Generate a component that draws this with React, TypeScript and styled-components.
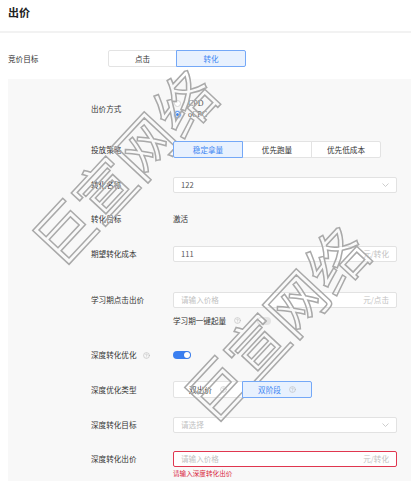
import React from 'react';
import styled, { createGlobalStyle } from 'styled-components';

const GlobalStyle = createGlobalStyle`
  html, body { margin: 0; padding: 0; background: #fff; }
  body { font-family: "Noto Sans CJK SC", "Noto Sans", sans-serif; color: #333; }
  * { box-sizing: border-box; }
`;

const Page = styled.div`
  position: relative;
  width: 411px;
  height: 481px;
  overflow: hidden;
  background: #fff;
  font-size: 7.6px;
  line-height: 1;
`;

const Header = styled.div`
  height: 33px;
  padding: 4px 0 0 8px;
  font-size: 11px;
  font-weight: 700;
  line-height: 16px;
  color: #222;
  border-bottom: 2px solid #f2f2f2;
`;

const TopRow = styled.div`
  display: flex;
  align-items: center;
  height: 17px;
  margin-top: 17px;
  padding-left: 8px;
`;

const TopLabel = styled.div`
  width: 100px;
  color: #333;
`;

const Panel = styled.div`
  margin: 12px 0 0 8px;
  background: #f8f8f8;
  padding: 19px 0 40px 83px;
  min-height: 410px;
`;

const FormItem = styled.div<{ $mt: number; $h: number }>`
  display: flex;
  align-items: center;
  margin-top: ${(p) => p.$mt}px;
  height: ${(p) => p.$h}px;
`;

const Label = styled.div`
  width: 82px;
  flex: none;
  display: flex;
  align-items: center;
  gap: 6px;
  color: #333;
`;

const Segments = styled.div`
  display: flex;
`;

const Segment = styled.div<{ $active?: boolean; $w?: number }>`
  position: relative;
  z-index: ${(p) => (p.$active ? 1 : 0)};
  width: ${(p) => p.$w ?? 70}px;
  height: 17px;
  display: flex;
  align-items: center;
  justify-content: center;
  gap: 8px;
  border: 1px solid ${(p) => (p.$active ? '#74a8f7' : '#e3e3e3')};
  background: ${(p) => (p.$active ? '#e8f1fe' : '#fff')};
  color: ${(p) => (p.$active ? '#3d86f2' : '#333')};
  & + & { margin-left: -1px; }
  &:first-child { border-radius: 2px 0 0 2px; }
  &:last-child { border-radius: 0 2px 2px 0; }
`;

const RadioGroup = styled.div`
  display: flex;
  flex-direction: column;
`;

const RadioItem = styled.div`
  display: flex;
  align-items: center;
  height: 11px;
  font-family: "Liberation Serif", serif;
  font-size: 8px;
  color: #555;
`;

const RadioCircle = styled.span<{ $checked?: boolean }>`
  width: 7px;
  height: 7px;
  margin: 0 7px 0 1px;
  border-radius: 50%;
  border: 1px solid ${(p) => (p.$checked ? '#3d86f2' : '#d6d6d6')};
  background: #fff;
  display: flex;
  align-items: center;
  justify-content: center;
  box-shadow: ${(p) => (p.$checked ? '0 0 0 1px rgba(61,134,242,0.18)' : 'none')};
  &::after {
    content: '';
    width: 3px;
    height: 3px;
    border-radius: 50%;
    background: ${(p) => (p.$checked ? '#3d86f2' : 'transparent')};
  }
`;

const Field = styled.div<{ $error?: boolean }>`
  width: 224px;
  height: 16px;
  display: flex;
  align-items: center;
  justify-content: space-between;
  padding: 0 7px;
  background: #fff;
  border: 1px solid ${(p) => (p.$error ? '#e0364f' : '#e2e2e2')};
  border-radius: 2px;
`;

const Value = styled.span<{ $placeholder?: boolean }>`
  color: ${(p) => (p.$placeholder ? '#c2c2c2' : '#555')};
`;

const Suffix = styled.span`
  color: #c2c2c2;
`;

const PlainText = styled.span`
  color: #333;
`;

const SubLine = styled.div`
  display: flex;
  align-items: center;
  color: #333;
`;

const Switch = styled.span<{ $on?: boolean }>`
  display: inline-flex;
  align-items: center;
  justify-content: ${(p) => (p.$on ? 'flex-end' : 'flex-start')};
  width: ${(p) => (p.$on ? 18 : 14)}px;
  height: 8px;
  padding: 1px;
  border-radius: 4px;
  background: ${(p) => (p.$on ? '#3b7ff0' : '#e4e4e4')};
  &::after {
    content: '';
    width: 6px;
    height: 6px;
    border-radius: 50%;
    background: #fff;
    box-shadow: 0 0 1px rgba(0, 0, 0, 0.25);
  }
`;

const ErrorText = styled.div`
  font-size: 6.6px;
  color: #d8283f;
`;

const Watermark = styled.div<{ $left: number; $top: number }>`
  position: absolute;
  left: ${(p) => p.$left}px;
  top: ${(p) => p.$top}px;
  width: 240px;
  text-align: center;
  font-family: "Noto Sans CJK SC", sans-serif;
  font-size: 60px;
  line-height: 60px;
  letter-spacing: -1px;
  white-space: nowrap;
  color: rgba(255, 255, 255, 0.15);
  -webkit-text-stroke: 1.5px #a9a9a9;
  transform: rotate(-47deg);
  transform-origin: center center;
  pointer-events: none;
`;

const Help = ({ ml = 0 }: { ml?: number }) => (
  <svg width="7" height="7" viewBox="0 0 24 24" style={{ marginLeft: ml, flex: 'none' }} fill="none" stroke="#b8b8b8" strokeWidth="2" strokeLinecap="round" strokeLinejoin="round">
    <circle cx="12" cy="12" r="10" />
    <path d="M9.09 9a3 3 0 0 1 5.83 1c0 2-3 3-3 3" />
    <path d="M12 17h.01" />
  </svg>
);

const Chevron = () => (
  <svg width="7" height="4" viewBox="0 0 7 4" fill="none" stroke="#c0c0c0" strokeWidth="0.8">
    <polyline points="0.5,0.5 3.5,3.5 6.5,0.5" />
  </svg>
);

export default function App() {
  return (
    <Page>
      <GlobalStyle />
      <Header>出价</Header>
      <TopRow>
        <TopLabel>竞价目标</TopLabel>
        <Segments>
          <Segment $w={69}>点击</Segment>
          <Segment $w={70} $active>转化</Segment>
        </Segments>
      </TopRow>
      <Panel>
        <FormItem $mt={0} $h={22}>
          <Label>出价方式</Label>
          <RadioGroup>
            <RadioItem><RadioCircle />CPD</RadioItem>
            <RadioItem><RadioCircle $checked />oCPC</RadioItem>
          </RadioGroup>
        </FormItem>
        <FormItem $mt={21} $h={17}>
          <Label>投放策略</Label>
          <Segments>
            <Segment $active>稳定拿量</Segment>
            <Segment>优先跑量</Segment>
            <Segment>优先低成本</Segment>
          </Segments>
        </FormItem>
        <FormItem $mt={19} $h={16}>
          <Label>转化名称</Label>
          <Field>
            <Value>122</Value>
            <Chevron />
          </Field>
        </FormItem>
        <FormItem $mt={18} $h={16}>
          <Label>转化目标</Label>
          <PlainText>激活</PlainText>
        </FormItem>
        <FormItem $mt={19} $h={16}>
          <Label>期望转化成本</Label>
          <Field>
            <Value>111</Value>
            <Suffix>元/转化</Suffix>
          </Field>
        </FormItem>
        <FormItem $mt={30} $h={16}>
          <Label>学习期点击出价</Label>
          <Field>
            <Value $placeholder>请输入价格</Value>
            <Suffix>元/点击</Suffix>
          </Field>
        </FormItem>
        <FormItem $mt={8} $h={9}>
          <Label />
          <SubLine>
            学习期一键起量
            <Help ml={8} />
            <span style={{ width: 16 }} />
            <Switch />
          </SubLine>
        </FormItem>
        <FormItem $mt={22} $h={16}>
          <Label>深度转化优化<Help /></Label>
          <Switch $on />
        </FormItem>
        <FormItem $mt={18} $h={17}>
          <Label>深度优化类型</Label>
          <Segments>
            <Segment>双出价<Help /></Segment>
            <Segment $active>双阶段<Help /></Segment>
          </Segments>
        </FormItem>
        <FormItem $mt={19} $h={16}>
          <Label>深度转化目标</Label>
          <Field>
            <Value $placeholder>请选择</Value>
            <Chevron />
          </Field>
        </FormItem>
        <FormItem $mt={18} $h={16}>
          <Label>深度转化出价</Label>
          <Field $error>
            <Value $placeholder>请输入价格</Value>
            <Suffix>元/转化</Suffix>
          </Field>
        </FormItem>
        <FormItem $mt={2} $h={9}>
          <Label />
          <ErrorText>请输入深度转化出价</ErrorText>
        </FormItem>
      </Panel>
      <Watermark $left={2} $top={136}>巨宣网络</Watermark>
      <Watermark $left={154} $top={293}>巨宣网络</Watermark>
    </Page>
  );
}
